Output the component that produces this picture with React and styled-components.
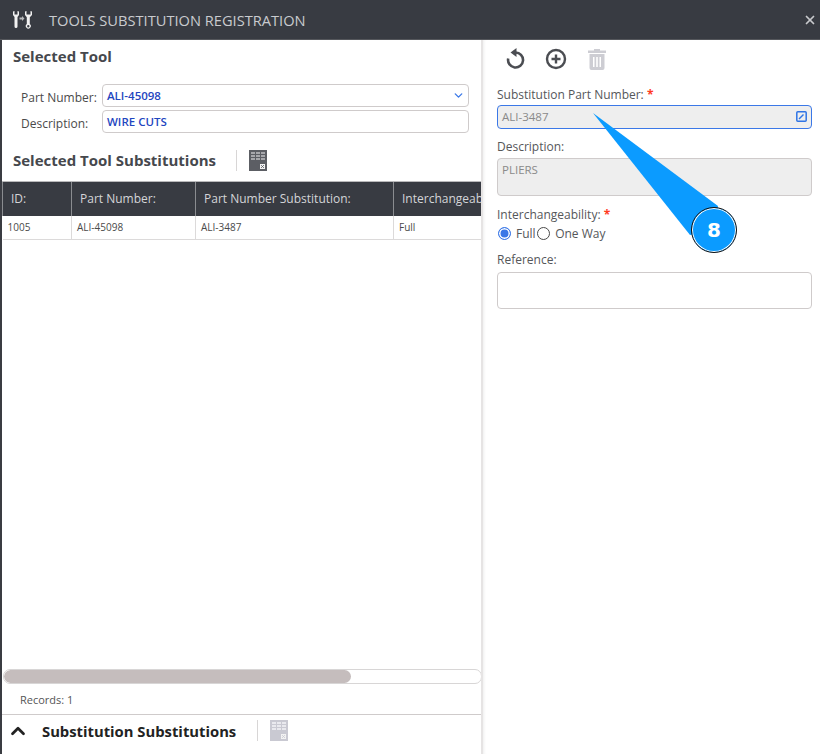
import React from 'react';
import styled, { createGlobalStyle } from 'styled-components';
import { ChevronUp, ChevronDown, X } from 'lucide-react';

const GlobalStyle = createGlobalStyle`
  html, body { margin: 0; padding: 0; background: #fff; }
  body { font-family: "Open Sans", "Noto Sans", sans-serif; color: #4a4a4a; overflow: hidden; }
`;

const SheetIcon = ({ muted }) => (
  <svg width="18" height="21" viewBox="0 0 18 21">
    <rect width="18" height="21" fill={muted ? '#c9c9d2' : '#5c5e64'} />
    <g fill={muted ? '#e9e9ee' : '#a6a7ab'}>
      {[2, 5, 8].map((y) => [2, 7, 12].map((x) => (
        <rect key={`${x}-${y}`} x={x} y={y} width="4" height="2" />
      )))}
    </g>
    <rect x="11" y="14" width="5" height="5" fill="#f2f2f2" />
    <path d="M12 15l3 3M15 15l-3 3" stroke={muted ? '#c9c9d2' : '#5c5e64'} strokeWidth="0.800" />
  </svg>
);

const ToolsIcon = () => (
  <svg width="22" height="18" viewBox="0 0 22 18" fill="#f1f1f1">
    <path d="M1 0.500v3.500l1.500 2V15.500a1.500 1.500 0 0 0 3 0V6L7 4V0.500L5.500 0v3.500h-3V0z" />
    <path d="M7.500 6.500h2.500V5l2.500 2.500L10 10V8.500H7.500z" opacity="0.700" />
    <path fillRule="evenodd" d="M13 0.500v3.500l1.800 2.200V13a2.500 2.500 0 1 0 3 0V6.200L20 4V0.500L18.500 0v3.500h-4V0zM16.300 14a1.200 1.200 0 1 1 0 2.400 1.200 1.200 0 0 1 0-2.400z" />
  </svg>
);

const UndoIcon = () => (
  <svg width="22" height="22" viewBox="0 0 22 22" fill="none">
    <path d="M11.500 4.500a7.500 7.500 0 1 1-7.300 6" stroke="#4b4d52" strokeWidth="2.600" />
    <path d="M12.500 0v9L6.500 4.500z" fill="#4b4d52" />
  </svg>
);

const App = () => (
  <Page>
    <GlobalStyle />
    <TitleBar>
      <TitleGroup>
        <ToolsIcon />
        <Title>TOOLS SUBSTITUTION REGISTRATION</Title>
      </TitleGroup>
      <CloseButton><X size={14} strokeWidth={3} /></CloseButton>
    </TitleBar>
    <Body>
      <LeftPane>
        <SectionTitle>Selected Tool</SectionTitle>
        <ToolForm>
          <FormLabel>Part Number:</FormLabel>
          <ToolInput>
            ALI-45098
            <ChevronDown size={13} strokeWidth={2.5} color="#3b78e7" />
          </ToolInput>
          <FormLabel>Description:</FormLabel>
          <ToolInput>WIRE CUTS</ToolInput>
        </ToolForm>
        <GridHeading>
          <HeadingText>Selected Tool Substitutions</HeadingText>
          <Divider />
          <SheetIcon />
        </GridHeading>
        <TableWrap>
          <Table>
            <thead>
              <tr>
                <Th $w={69}>ID:</Th>
                <Th $w={124}>Part Number:</Th>
                <Th $w={198}>Part Number Substitution:</Th>
                <Th $w={120}>Interchangeability:</Th>
              </tr>
            </thead>
            <tbody>
              <tr>
                <Td>1005</Td>
                <Td>ALI-45098</Td>
                <Td>ALI-3487</Td>
                <Td>Full</Td>
              </tr>
            </tbody>
          </Table>
        </TableWrap>
        <ScrollTrack><ScrollThumb /></ScrollTrack>
        <Records>Records: 1</Records>
        <BottomBar>
          <ChevronUp size={22} strokeWidth={3} color="#222" />
          <BottomTitle>Substitution Substitutions</BottomTitle>
          <Divider />
          <SheetIcon muted />
        </BottomBar>
      </LeftPane>
      <RightPane>
        <Toolbar>
          <ToolButton><UndoIcon /></ToolButton>
          <ToolButton>
            <svg width="22" height="22" viewBox="0 0 22 22" fill="none" stroke="#4b4d52" strokeWidth="2.400">
              <circle cx="11" cy="11" r="9" />
              <path d="M11 6.500v9M6.500 11h9" />
            </svg>
          </ToolButton>
          <ToolButton>
            <svg width="18" height="21" viewBox="0 0 18 21" fill="#cdcdd3">
              <path d="M6 0h6v1.500h6V4H0V1.500h6z" />
              <path fillRule="evenodd" d="M1.500 5h15v14a2 2 0 0 1-2 2h-11a2 2 0 0 1-2-2zM5 8v10h1.500V8zm3.200 0v10h1.600V8zm3.300 0v10H13V8z" />
            </svg>
          </ToolButton>
        </Toolbar>
        <Field $gap={7}>
          <FieldLabel>Substitution Part Number: <Required>*</Required></FieldLabel>
          <ReadOnlyInput>
            ALI-3487
            <EditBadge>
              <svg width="11" height="11" viewBox="0 0 11 11" fill="none" stroke="#2f74e6" strokeWidth="1.500">
                <rect x="0.800" y="0.800" width="9.400" height="9.400" rx="1" />
                <path d="M3 8l4.500-4.500" />
              </svg>
            </EditBadge>
          </ReadOnlyInput>
        </Field>
        <Field $gap={8}>
          <FieldLabel>Description:</FieldLabel>
          <ReadOnlyArea>PLIERS</ReadOnlyArea>
        </Field>
        <Field $gap={9}>
          <FieldLabel>Interchangeability: <Required>*</Required></FieldLabel>
          <RadioRow>
            <RadioDot $on />
            <RadioText>Full</RadioText>
            <RadioDot />
            <RadioText>One Way</RadioText>
          </RadioRow>
        </Field>
        <Field $gap={9}>
          <FieldLabel>Reference:</FieldLabel>
          <EmptyInput />
        </Field>
      </RightPane>
    </Body>
    <Callout>
      <svg width="150" height="145" viewBox="0 0 150 145">
        <path d="M0 0L125 93 L121 117 L97 122z" fill="#0b9bff" />
      </svg>
      <CalloutBadge>8</CalloutBadge>
    </Callout>
  </Page>
);

export default App;

const Page = styled.div`
  position: relative;
  width: 820px;
  height: 754px;
  display: flex;
  flex-direction: column;
  overflow: hidden;
`;
const TitleBar = styled.div`
  height: 39px;
  background: #383b42;
  border-bottom: 1px solid #55575c;
  display: flex;
  align-items: center;
  justify-content: space-between;
  padding: 0 3px 0 12px;
  flex-shrink: 0;
`;
const TitleGroup = styled.div`
  display: flex;
  align-items: center;
  gap: 15px;
`;
const Title = styled.div`
  color: #c9cbcf;
  font-size: 14.650px;
`;
const CloseButton = styled.div`
  color: #c8c9cc;
  display: flex;
`;
const Body = styled.div`
  flex: 1;
  display: flex;
  min-height: 0;
  border-left: 2px solid #3a3c42;
`;
const LeftPane = styled.div`
  width: 479px;
  display: flex;
  flex-direction: column;
  flex-shrink: 0;
  border-right: 2px solid #e6e4e4;
  overflow: hidden;
`;
const SectionTitle = styled.div`
  font-size: 15px;
  font-weight: 700;
  color: #46484d;
  padding: 6px 0 0 11px;
  height: 38px;
`;
const ToolForm = styled.div`
  display: grid;
  grid-template-columns: 81px 367px;
  row-gap: 3px;
  padding-left: 19px;
`;
const FormLabel = styled.div`
  font-size: 12px;
  color: #4a4a4a;
  line-height: 23px;
  padding-top: 2px;
  height: 21px;
`;
const ToolInput = styled.div`
  height: 21px;
  border: 1px solid #cfcbcb;
  border-radius: 4px;
  font-size: 11.500px;
  font-weight: 600;
  color: #1f46c0;
  display: flex;
  align-items: center;
  justify-content: space-between;
  padding: 0 3px 0 4px;
`;
const GridHeading = styled.div`
  display: flex;
  align-items: center;
  gap: 12px;
  height: 28px;
  margin-top: 13px;
  padding-left: 11px;
`;
const HeadingText = styled.div`
  font-size: 15px;
  font-weight: 700;
  color: #46484d;
  width: 211px;
  white-space: nowrap;
`;
const Divider = styled.div`
  width: 1px;
  height: 21px;
  background: #d8d6d6;
`;
const TableWrap = styled.div`
  flex: 1;
  margin-top: 7px;
  overflow: hidden;
`;
const Table = styled.table`
  border-collapse: collapse;
  table-layout: fixed;
  width: 511px;
`;
const Th = styled.th`
  width: ${(p) => p.$w}px;
  height: 34px;
  background: #383b42;
  color: #d4d5d8;
  font-size: 12px;
  font-weight: 400;
  text-align: left;
  padding: 0 0 0 8px;
  box-sizing: border-box;
  border-left: 1px solid #8a8c90;
  border-top: 1px solid #b9b9bb;
  white-space: nowrap;
  overflow: hidden;
`;
const Td = styled.td`
  height: 24px;
  font-size: 10px;
  color: #4a4a4a;
  padding: 0 0 0 5px;
  box-sizing: border-box;
  border-right: 1px solid #dcdada;
  border-bottom: 1px solid #dcdada;
`;
const ScrollTrack = styled.div`
  height: 13px;
  margin: 0 -1px 0 1px;
  border: 1px solid #d8d6d6;
  border-radius: 7px;
  overflow: hidden;
  background: #fff;
`;
const ScrollThumb = styled.div`
  width: 347px;
  height: 100%;
  border-radius: 7px;
  background: #c5bdbd;
`;
const Records = styled.div`
  font-size: 11px;
  color: #555;
  height: 30px;
  display: flex;
  align-items: center;
  padding-left: 18px;
  border-bottom: 1px solid #cfcbcb;
`;
const BottomBar = styled.div`
  height: 31px;
  padding-bottom: 8px;
  display: flex;
  align-items: center;
  gap: 12px;
  padding-left: 5px;
  flex-shrink: 0;
`;
const BottomTitle = styled.div`
  font-size: 14.800px;
  font-weight: 700;
  color: #222;
  width: 203px;
  margin-left: 1px;
  white-space: nowrap;
`;
const RightPane = styled.div`
  flex: 1;
  display: flex;
  flex-direction: column;
  padding: 0 8px 0 14px;
  box-shadow: inset 3px 0 3px -2px #eee;
`;
const Toolbar = styled.div`
  display: flex;
  align-items: center;
  gap: 18px;
  height: 38px;
  padding-left: 6px;
`;
const ToolButton = styled.div`
  width: 23px;
  display: flex;
  justify-content: center;
`;
const Field = styled.div`
  display: flex;
  flex-direction: column;
  margin-top: ${(p) => p.$gap}px;
`;
const FieldLabel = styled.div`
  font-size: 12px;
  color: #55575a;
  line-height: 19px;
  height: 20px;
`;
const Required = styled.span`
  color: #ff3b1f;
  font-weight: 700;
`;
const ReadOnlyInput = styled.div`
  height: 24px;
  box-sizing: border-box;
  background: #eeeeee;
  border: 1px solid #3b78e7;
  border-radius: 4px;
  font-size: 11.500px;
  color: #8a8a8a;
  display: flex;
  align-items: center;
  justify-content: space-between;
  padding: 0 4px 1px;
`;
const EditBadge = styled.span`
  display: flex;
`;
const ReadOnlyArea = styled.div`
  height: 30px;
  margin-top: 1px;
  background: #eeeeee;
  border: 1px solid #cfcbcb;
  border-radius: 4px;
  font-size: 11.500px;
  font-weight: 500;
  color: #8a8a8a;
  padding: 3px 4px;
`;
const RadioRow = styled.div`
  display: flex;
  align-items: center;
  height: 16px;
  padding-left: 1px;
`;
const RadioDot = styled.span`
  width: 13px;
  height: 13px;
  box-sizing: border-box;
  border-radius: 50%;
  border: 1.500px solid ${(p) => (p.$on ? '#3b78e7' : '#4a4a4a')};
  background: ${(p) => (p.$on ? '#3b78e7' : '#fff')};
  box-shadow: ${(p) => (p.$on ? 'inset 0 0 0 1.500px #fff' : 'none')};
`;
const RadioText = styled.span`
  font-size: 12px;
  color: #55575a;
  margin: 0 1.500px 0 5px;
`;
const EmptyInput = styled.div`
  height: 35px;
  margin-top: 2px;
  background: #fff;
  border: 1px solid #cfcbcb;
  border-radius: 4px;
`;
const Callout = styled.div`
  position: absolute;
  left: 593px;
  top: 113px;
  width: 150px;
  height: 145px;
`;
const CalloutBadge = styled.div`
  position: absolute;
  left: 98px;
  top: 94px;
  width: 46px;
  height: 46px;
  box-sizing: border-box;
  border-radius: 50%;
  background: #0b9bff;
  border: 1px solid #111;
  box-shadow: inset 0 0 0 1px #fff;
  color: #fff;
  font-family: "DejaVu Sans", sans-serif;
  font-size: 20px;
  font-weight: 700;
  display: flex;
  align-items: center;
  justify-content: center;
`;
